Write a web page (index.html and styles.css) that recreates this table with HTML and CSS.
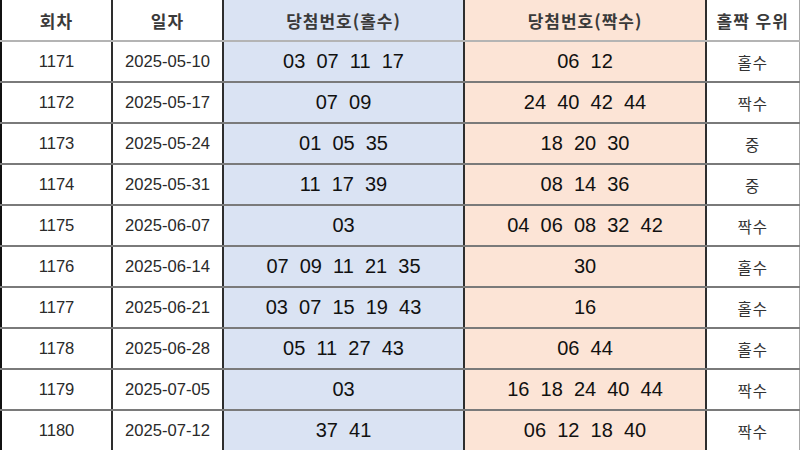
FILE: index.html
```html
<!DOCTYPE html>
<html lang="ko">
<head>
<meta charset="utf-8">
<title>당첨번호 홀짝</title>
<link rel="stylesheet" href="styles.css">
</head>
<body>
<table class="lotto">
  <colgroup>
    <col class="c-round">
    <col class="c-date">
    <col class="c-odd">
    <col class="c-even">
    <col class="c-win">
  </colgroup>
  <thead>
    <tr>
      <th>회차</th>
      <th>일자</th>
      <th class="odd">당첨번호(홀수)</th>
      <th class="even">당첨번호(짝수)</th>
      <th>홀짝 우위</th>
    </tr>
  </thead>
  <tbody>
    <tr><td>1171</td><td>2025-05-10</td><td class="odd num">03&nbsp; 07&nbsp; 11&nbsp; 17</td><td class="even num">06&nbsp; 12</td><td class="kr">홀수</td></tr>
    <tr><td>1172</td><td>2025-05-17</td><td class="odd num">07&nbsp; 09</td><td class="even num">24&nbsp; 40&nbsp; 42&nbsp; 44</td><td class="kr">짝수</td></tr>
    <tr><td>1173</td><td>2025-05-24</td><td class="odd num">01&nbsp; 05&nbsp; 35</td><td class="even num">18&nbsp; 20&nbsp; 30</td><td class="kr">중</td></tr>
    <tr><td>1174</td><td>2025-05-31</td><td class="odd num">11&nbsp; 17&nbsp; 39</td><td class="even num">08&nbsp; 14&nbsp; 36</td><td class="kr">중</td></tr>
    <tr><td>1175</td><td>2025-06-07</td><td class="odd num">03</td><td class="even num">04&nbsp; 06&nbsp; 08&nbsp; 32&nbsp; 42</td><td class="kr">짝수</td></tr>
    <tr><td>1176</td><td>2025-06-14</td><td class="odd num">07&nbsp; 09&nbsp; 11&nbsp; 21&nbsp; 35</td><td class="even num">30</td><td class="kr">홀수</td></tr>
    <tr><td>1177</td><td>2025-06-21</td><td class="odd num">03&nbsp; 07&nbsp; 15&nbsp; 19&nbsp; 43</td><td class="even num">16</td><td class="kr">홀수</td></tr>
    <tr><td>1178</td><td>2025-06-28</td><td class="odd num">05&nbsp; 11&nbsp; 27&nbsp; 43</td><td class="even num">06&nbsp; 44</td><td class="kr">홀수</td></tr>
    <tr><td>1179</td><td>2025-07-05</td><td class="odd num">03</td><td class="even num">16&nbsp; 18&nbsp; 24&nbsp; 40&nbsp; 44</td><td class="kr">짝수</td></tr>
    <tr><td>1180</td><td>2025-07-12</td><td class="odd num">37&nbsp; 41</td><td class="even num">06&nbsp; 12&nbsp; 18&nbsp; 40</td><td class="kr">짝수</td></tr>
  </tbody>
</table>
</body>
</html>
```

FILE: styles.css
```css
html, body {
  margin: 0;
  padding: 0;
  background: #ffffff;
}

.lotto {
  width: 798px;
  table-layout: fixed;
  border-collapse: collapse;
  font-family: "Liberation Sans", Arial, sans-serif;
  color: #222222;
}

.c-round { width: 111px; }
.c-date { width: 111px; }
.c-odd { width: 241px; }
.c-even { width: 242px; }
.c-win { width: 93px; }

.lotto th,
.lotto td {
  padding: 0;
  text-align: center;
  vertical-align: middle;
  border-left: 2px solid #2e2e2e;
  border-bottom: 2px solid #7a7a7a;
  white-space: nowrap;
}

.lotto th:last-child,
.lotto td:last-child {
  border-right: 1px solid #a8a8a8;
}

.lotto th:first-child,
.lotto td:first-child {
  border-left: 2px solid #111111;
}

.lotto th {
  height: 40px;
  font-family: "Noto Sans CJK KR", "Noto Sans", sans-serif;
  font-size: 17px;
  font-weight: 700;
  color: #3a3a3a;
  letter-spacing: 1px;
  border-bottom-color: #b4b4b4;
}

.lotto td {
  height: 39px;
  font-size: 16.6px;
  color: #2a2a2a;
}

.lotto tbody tr:last-child td {
  border-bottom: 1px solid #a8a8a8;
}

.lotto .num {
  font-size: 20px;
  color: #111111;
}

.lotto .kr {
  font-family: "Noto Sans CJK KR", "Noto Sans", sans-serif;
  font-size: 15.5px;
  color: #333333;
  letter-spacing: 1px;
}

.odd { background: #dae3f3; }
.even { background: #fce4d6; }
```
